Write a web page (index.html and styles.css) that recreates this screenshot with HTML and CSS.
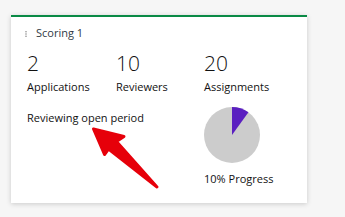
FILE: index.html
```html
<!DOCTYPE html>
<html>
<head>
<meta charset="utf-8">
<link rel="stylesheet" href="styles.css">
</head>
<body>
<div class="card">
  <div class="card-head">
    <svg class="handle" width="2" height="6" viewBox="0 0 2 6"><circle cx="1" cy="0.8" r="0.7"/><circle cx="1" cy="3" r="0.7"/><circle cx="1" cy="5.2" r="0.7"/></svg>
    <span class="title">Scoring 1</span>
  </div>
  <div class="grid">
    <div class="stat"><div class="num">2</div><div class="label">Applications</div></div>
    <div class="stat"><div class="num">10</div><div class="label">Reviewers</div></div>
    <div class="stat"><div class="num">20</div><div class="label">Assignments</div></div>
    <div class="status">Reviewing open period</div>
    <div class="progress">
      <svg class="pie" width="56" height="56" viewBox="0 0 56 56">
        <circle cx="28" cy="28" r="28" fill="#cccccc"/>
        <path d="M28 28 L28 0 A28 28 0 0 1 44.46 5.35 Z" fill="#5a1fc0"/>
      </svg>
      <div class="label">10% Progress</div>
    </div>
  </div>
</div>
<svg class="arrow" width="345" height="217" viewBox="0 0 345 217">
  <polygon points="93.5,129 124,136.5 116.5,141.5 157,187 108.5,149 104.5,154.5" fill="#e6000a" stroke="#e6000a" stroke-width="3" stroke-linejoin="round"/>
</svg>
</body>
</html>
```

FILE: styles.css
```css
html, body {
  margin: 0;
  padding: 0;
}
body {
  background: #f6f6f6;
  font-family: "Open Sans", "Liberation Sans", sans-serif;
  color: #111;
  width: 345px;
  height: 217px;
  overflow: hidden;
  position: relative;
  padding-top: 15px;
  box-sizing: border-box;
}
.card {
  margin-left: 11px;
  width: 296px;
  height: 188px;
  box-sizing: border-box;
  background: #fff;
  border-top: 2px solid #0a8a45;
  box-shadow: 0 1px 5px rgba(0,0,0,0.18);
  padding-top: 8px;
}
.card-head {
  display: flex;
  align-items: center;
  padding-left: 14px;
  height: 15px;
}
.handle {
  fill: #777;
  margin-right: 9px;
  margin-top: 3px;
}
.title {
  font-size: 11px;
  line-height: 15px;
  color: #2f3a44;
}
.grid {
  display: grid;
  grid-template-columns: 89px 88px 1fr;
  row-gap: 13px;
  padding-left: 16px;
  margin-top: 11px;
}
.num {
  font-size: 21px;
  line-height: 24px;
  font-weight: 300;
  color: #111;
}
.label {
  font-size: 11px;
  line-height: 15px;
  margin-top: 4px;
  color: #111;
}
.status {
  grid-column: 1 / 3;
  font-size: 11px;
  line-height: 15px;
  margin-top: 3px;
  color: #111;
}
.progress {
  display: flex;
  flex-direction: column;
  align-items: flex-start;
}
.pie {
  display: block;
}
.progress .label {
  margin-top: 8px;
}
.arrow {
  position: absolute;
  left: 0;
  top: 0;
  pointer-events: none;
}
```
